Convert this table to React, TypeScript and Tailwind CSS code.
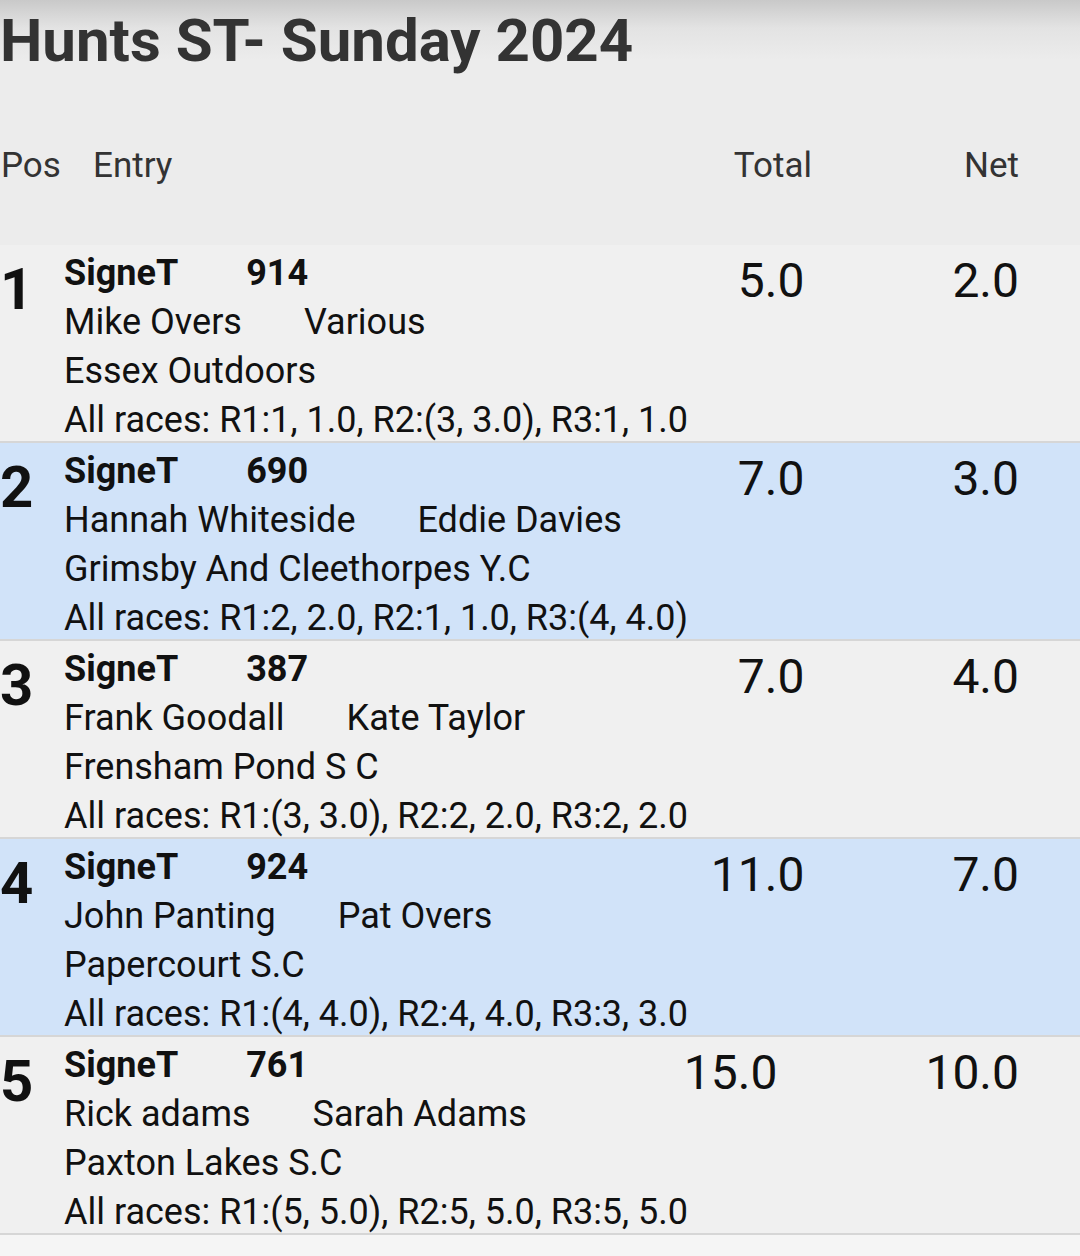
const rows = [
  {
    pos: 1,
    boat: "SigneT",
    sail: "914",
    helm: "Mike Overs",
    crew: "Various",
    club: "Essex Outdoors",
    races: "All races: R1:1, 1.0, R2:(3, 3.0), R3:1, 1.0",
    total: "5.0",
    net: "2.0",
  },
  {
    pos: 2,
    boat: "SigneT",
    sail: "690",
    helm: "Hannah Whiteside",
    crew: "Eddie Davies",
    club: "Grimsby And Cleethorpes Y.C",
    races: "All races: R1:2, 2.0, R2:1, 1.0, R3:(4, 4.0)",
    total: "7.0",
    net: "3.0",
  },
  {
    pos: 3,
    boat: "SigneT",
    sail: "387",
    helm: "Frank Goodall",
    crew: "Kate Taylor",
    club: "Frensham Pond S C",
    races: "All races: R1:(3, 3.0), R2:2, 2.0, R3:2, 2.0",
    total: "7.0",
    net: "4.0",
  },
  {
    pos: 4,
    boat: "SigneT",
    sail: "924",
    helm: "John Panting",
    crew: "Pat Overs",
    club: "Papercourt S.C",
    races: "All races: R1:(4, 4.0), R2:4, 4.0, R3:3, 3.0",
    total: "11.0",
    net: "7.0",
  },
  {
    pos: 5,
    boat: "SigneT",
    sail: "761",
    helm: "Rick adams",
    crew: "Sarah Adams",
    club: "Paxton Lakes S.C",
    races: "All races: R1:(5, 5.0), R2:5, 5.0, R3:5, 5.0",
    total: "15.0",
    net: "10.0",
  },
];

export default function App() {
  return (
    <div className="min-h-[1256px] w-[1080px] bg-[#f5f5f5] font-['Roboto',sans-serif]">
      {/* HEADER */}
      <div className="h-[245px] bg-[linear-gradient(to_bottom,#c9c9c9_0px,#e3e3e3_28px,#ececec_60px)]">
        <h1 className="pt-[11px] text-[60px] leading-[60px] font-bold text-[#333333] whitespace-nowrap">
          Hunts ST- Sunday 2024
        </h1>
        <div className="mt-[77px] flex text-[35px] leading-[35px] text-[#333333] pr-[61px]">
          <span className="w-[93px] pl-[1px]">Pos</span>
          <span className="flex-1">Entry</span>
          <span>Total</span>
          <span className="ml-[152px]">Net</span>
        </div>
      </div>

      {/* ROWS */}
      {rows.map((r, i) => (
        <div
          key={r.pos}
          className={`flex h-[198px] border-b-2 border-[#d6d6d6] pr-[61px] text-[#111111] ${
            i % 2 === 1 ? "bg-[#d1e3f9]" : "bg-[#f0f0f0]"
          }`}
        >
          <div className="w-[64px] shrink-0 pt-[15px] text-[58px] leading-[58px] font-bold">
            {r.pos}
          </div>
          <div className="flex-1 min-w-0 pt-[4px] text-[36px] leading-[49px] whitespace-nowrap">
            <div className="font-bold">
              {r.boat}
              <span className="ml-[68px]">{r.sail}</span>
            </div>
            <div className="flex gap-[62px]">
              <span>{r.helm}</span>
              <span>{r.crew}</span>
            </div>
            <div>{r.club}</div>
            <div>{r.races}</div>
          </div>
          <div className="pt-[12px] text-[48px] leading-[48px]">{r.total}</div>
          <div className="ml-[148px] pt-[12px] text-[48px] leading-[48px]">{r.net}</div>
        </div>
      ))}
    </div>
  );
}
